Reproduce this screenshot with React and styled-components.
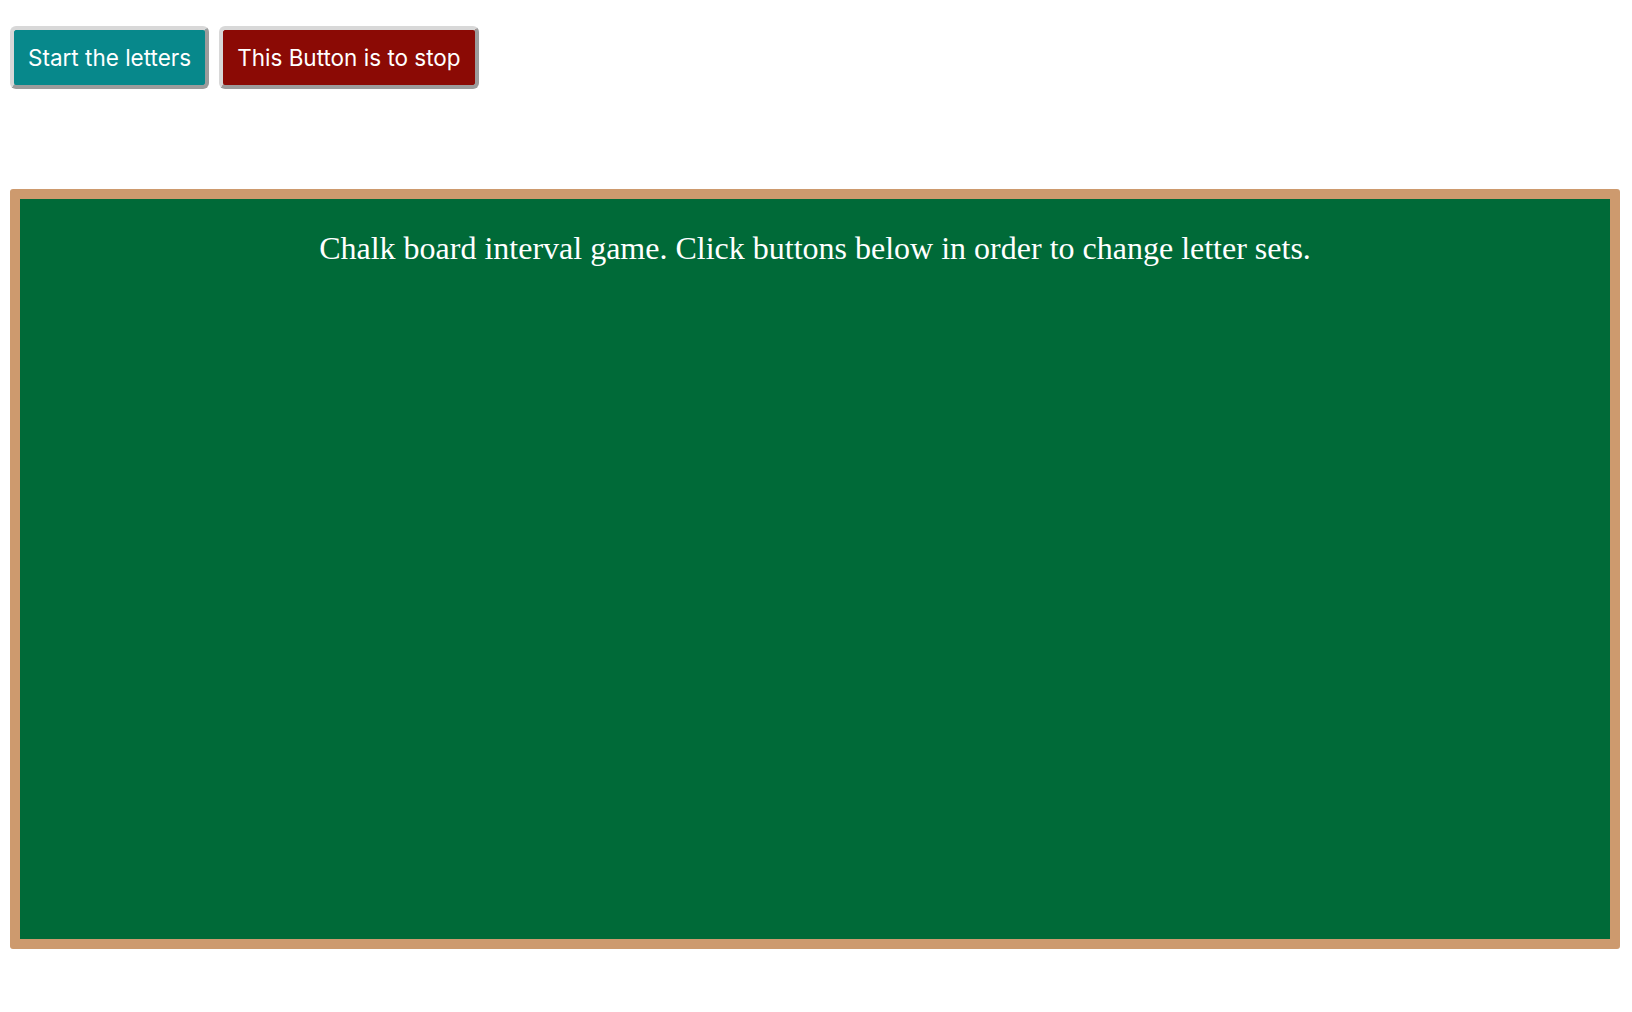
import React from "react";
import styled, { createGlobalStyle } from "styled-components";

const GlobalStyle = createGlobalStyle`
  body {
    margin: 0;
    background: #fff;
    font-family: "Liberation Serif", serif;
  }
`;

const Page = styled.div`
  padding: 26px 12px 40px 10px;
`;

const ButtonRow = styled.div`
  display: flex;
  gap: 10px;
`;

const ActionButton = styled.button`
  font-family: "Inter", "Noto Sans", sans-serif;
  font-size: 22.5px;
  line-height: 27px;
  color: #fff;
  background-color: ${(props) => props.color};
  padding: 14px 14px;
  border: 4px solid;
  border-color: #d8d8d8 #9c9c9c #9c9c9c #d8d8d8;
  border-radius: 6px;
  cursor: pointer;
`;

const Board = styled.div`
  margin-top: 100px;
  height: 740px;
  background-color: #006a38;
  border: 10px solid #cd9a6e;
  border-radius: 3px;
`;

const BoardTitle = styled.h2`
  margin: 0;
  padding-top: 31px;
  text-align: center;
  color: #fff;
  font-weight: normal;
  font-size: 32px;
  font-family: "Liberation Serif", serif;
`;

const App = () => {
  return (
    <React.Fragment>
      <GlobalStyle />
      <Page>
        <ButtonRow>
          <ActionButton color="#07888b">Start the letters</ActionButton>
          <ActionButton color="#8b0a05">This Button is to stop</ActionButton>
        </ButtonRow>
        <Board>
          <BoardTitle>
            Chalk board interval game. Click buttons below in order to change
            letter sets.
          </BoardTitle>
        </Board>
      </Page>
    </React.Fragment>
  );
};

export default App;
